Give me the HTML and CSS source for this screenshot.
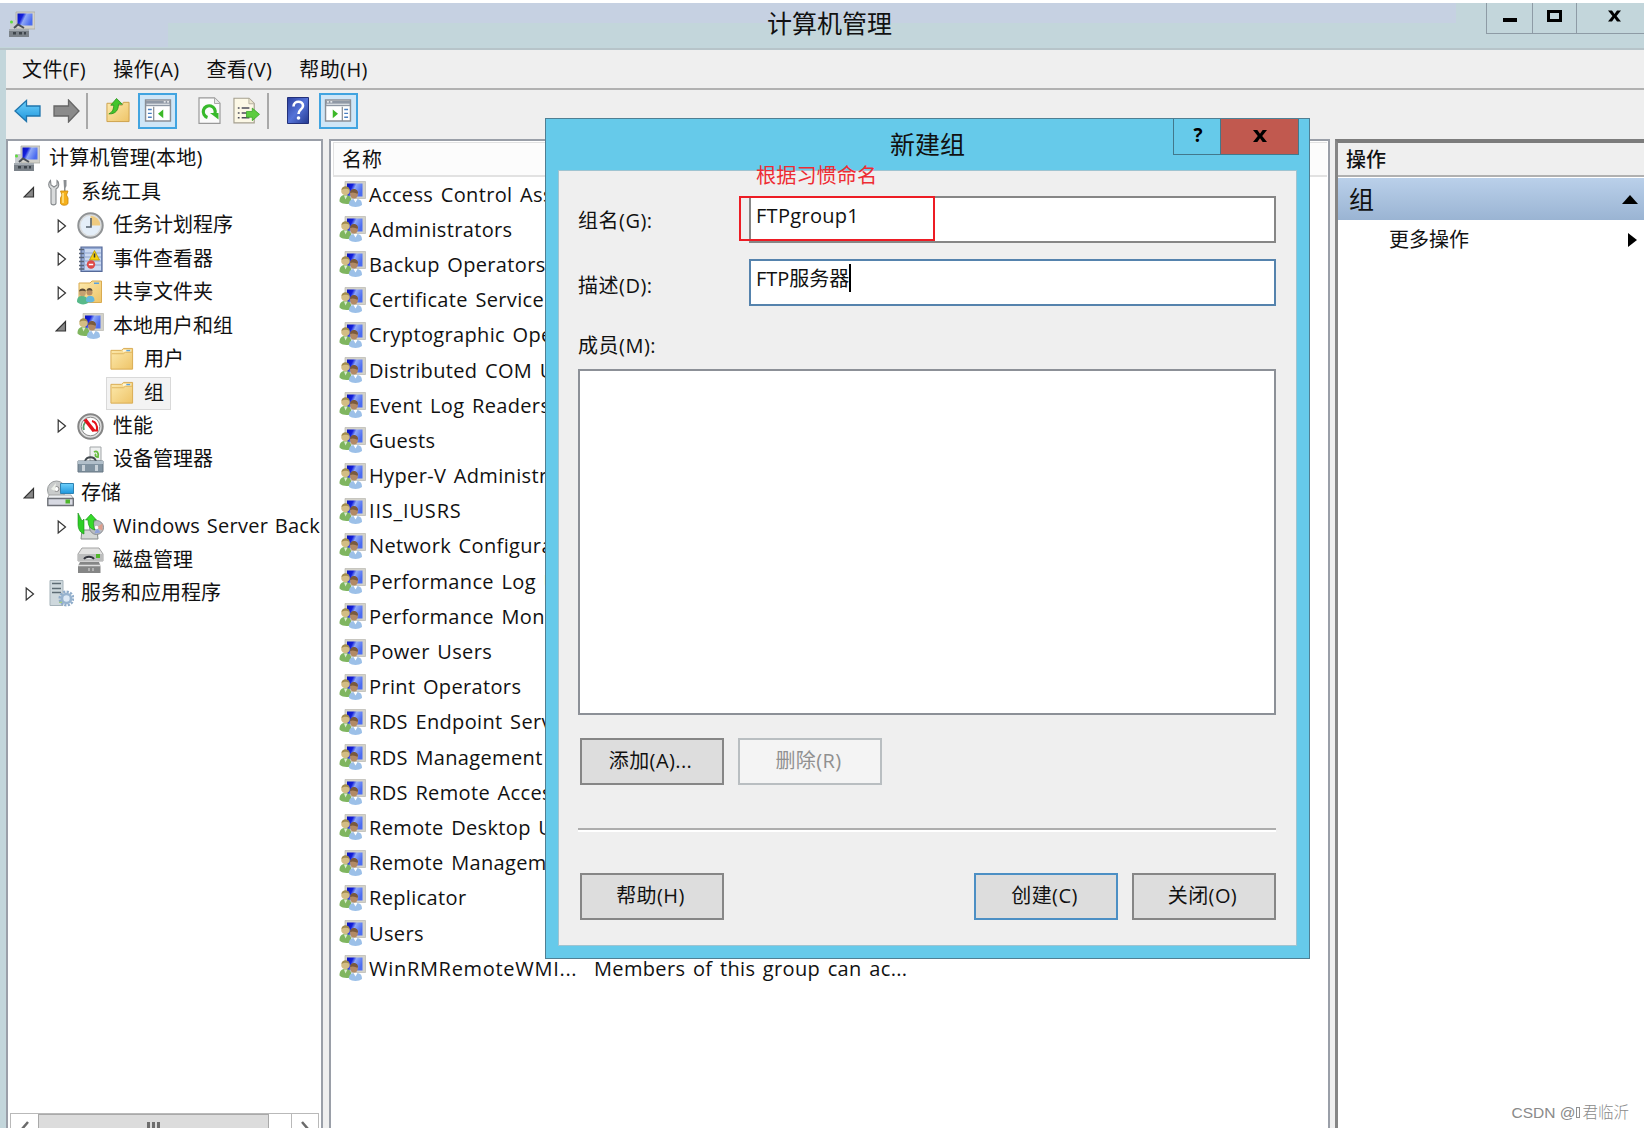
FILE: index.html
```html
<!DOCTYPE html>
<html lang="zh-CN">
<head>
  <meta charset="UTF-8" />
  <title>计算机管理</title>
  <link rel="stylesheet" href="styles.css">
</head>

<body>
  <!-- Icônes -->
  <svg width="0" height="0" class="defs">
    <defs>
      <linearGradient id="g-screen" x1="0" y1="0" x2="1" y2="0.4">
        <stop offset="0" stop-color="#0a12b8" /><stop offset="0.35" stop-color="#1420dc" /><stop offset="0.55" stop-color="#8fa8f6" /><stop offset="1" stop-color="#4b6cf0" />
      </linearGradient>
      <linearGradient id="g-folder" x1="0" y1="0" x2="1" y2="1">
        <stop offset="0" stop-color="#fdeaae" /><stop offset="1" stop-color="#eec468" />
      </linearGradient>
      <linearGradient id="g-blue" x1="0" y1="0" x2="0" y2="1">
        <stop offset="0" stop-color="#6fd0fb" /><stop offset="1" stop-color="#1e96dc" />
      </linearGradient>
      <linearGradient id="g-help" x1="0" y1="0" x2="1" y2="1">
        <stop offset="0" stop-color="#2b3f9e" /><stop offset="0.5" stop-color="#5573d8" /><stop offset="1" stop-color="#24398f" />
      </linearGradient>

      <symbol id="i-pc" viewBox="0 0 27 27">
        <path d="M8 1h19v17H8z" fill="#d3d2cb" stroke="#aaa9a2" stroke-width=".8" />
        <path d="M9.500 2.500h15v12h-15z" fill="url(#g-screen)" />
        <path d="M2 9h6v9H2z" fill="#c9cdd0" />
        <circle cx="3.500" cy="11" r="1.500" fill="#5fdc3c" />
        <path d="M6 17l4-3.500 6 3.500" fill="none" stroke="#4a4f55" stroke-width="2" />
        <path d="M1 18h20v8H1z" fill="#7b8289" />
        <path d="M1 18h20v2H1z" fill="#a4abb1" />
        <path d="M5 21h3v2.500H5zM11 21h3v2.500h-3zM16 21h2v2.500h-2z" fill="#3d444b" />
      </symbol>

      <symbol id="i-users" viewBox="0 0 27 27">
        <path d="M6 .5h20.500v17H6z" fill="#d3d2ca" stroke="#b9b8b0" stroke-width=".7" />
        <path d="M8 2.500h15.500v13H8z" fill="url(#g-screen)" />
        <path d="M.5 20.500c0-5 2-6.500 6-6.500s6 2 6 8c-3 1.500-9 1.500-12-1.500z" fill="#7fb55f" />
        <path d="M5 14.500l1.500 4 2-4z" fill="#dcebd2" />
        <circle cx="6.500" cy="10" r="4.300" fill="#d3bd84" />
        <path d="M2.500 9c0-5 8-5 8 0-2-1.500-5-2-8 0z" fill="#a08c4e" />
        <path d="M10 24c0-5 2-6 6.500-6s6.500 1.500 6.500 6c-3 2.500-10 2.500-13 0z" fill="#9cc0e8" />
        <path d="M14.500 18l2 3.500 2-3.500z" fill="#fff" />
        <ellipse cx="15" cy="13" rx="3.900" ry="4.500" fill="#b28a65" />
        <path d="M11 12c0-5.500 8.500-5 8 .5-3 0-4-2-8-.5z" fill="#7a5a3d" />
      </symbol>

      <symbol id="i-folder" viewBox="0 0 27 27">
        <path d="M2 4h11l2-2h9.500v21.500H2z" fill="url(#g-folder)" stroke="#d9ab51" stroke-width="1" />
        <path d="M14.500 3.500h8v2h-8z" fill="#fff8dd" /><path d="M18 3.500h4v1.500h-4z" fill="#5ba2dd" />
        <path d="M3 7.500h12l2-1.500h7" fill="none" stroke="#e0b660" />
      </symbol>

      <symbol id="i-tools" viewBox="0 0 27 27">
        <path d="M3.500 1.500c-2 2-3 6 .5 8.500v14c0 2.500 5 2.500 5 0V10c4-2 3-7 1-8.500v4.500l-3 2-3-2z" fill="#d9dbdc" stroke="#85898c" stroke-width="1.100" />
        <path d="M16.500 1h3v6l-1 2v3h-1.500V9z" fill="#8a8e92" />
        <path d="M13.500 12h7.500l-1.500 4 1.500 3v5c0 3-7.500 3-7.500 0v-5l1.500-3z" fill="#f5b01c" stroke="#c98508" stroke-width=".8" />
        <path d="M16 14v10" stroke="#ffe48b" stroke-width="1.500" />
      </symbol>

      <symbol id="i-clock" viewBox="0 0 27 27">
        <circle cx="13.500" cy="13.500" r="12.200" fill="#d9dbdc" stroke="#909395" stroke-width="2" />
        <circle cx="13.500" cy="13.500" r="9.800" fill="#e4eef8" />
        <path d="M13.500 13.500V3.700a9.800 9.800 0 0 1 9.800 9.800z" fill="#efcb80" />
        <path d="M14 6v9h-5" fill="none" stroke="#55636f" stroke-width="1.600" />
      </symbol>

      <symbol id="i-event" viewBox="0 0 27 27">
        <path d="M4 1h21v24.500H4z" fill="#93a9d3" stroke="#566a99" stroke-width="1.200" />
        <path d="M8 3h16v21H8z" fill="#cbd9f1" />
        <path d="M8 7h16M8 11h16M8 15h16M8 19h16" stroke="#8ea4cf" />
        <path d="M2 3.500h5M2 7.500h5M2 11.500h5M2 15.500h5M2 19.500h5M2 23h5" stroke="#596477" stroke-width="1.400" />
        <path d="M17.500 4.500l5 9.500h-10z" fill="#f6d210" stroke="#b89a08" stroke-width=".8" />
        <path d="M17.500 7.500v4" stroke="#333" stroke-width="1.500" />
        <circle cx="14" cy="18.500" r="4.200" fill="#dd4a48" />
        <path d="M11.800 18.500h4.400" stroke="#fff" stroke-width="1.500" />
      </symbol>

      <symbol id="i-share" viewBox="0 0 27 27">
        <path d="M2 4h11l2-2h9.500v21.500H2z" fill="url(#g-folder)" stroke="#d9ab51" />
        <path d="M17 3.500h5v1.500h-5z" fill="#5ba2dd" />
        <path d="M0 23c0-5 2-6 5-6s6 1 6 7c-3 2-8 2-11-1z" fill="#58b98a" />
        <path d="M9 22c0-5 2-5 4.500-5s4 1 4 5c-3 2-6 2-8.500 0z" fill="#65b7dc" />
        <circle cx="5.500" cy="14" r="3.300" fill="#c4a171" /><circle cx="12.500" cy="13.500" r="3" fill="#b98e63" />
        <path d="M2 12.500c0-4 7-4 7 0-2-1-5-1-7 0zM9.500 12c0-4 6-4 6 0-2-1-4-1-6 0z" fill="#5b4b36" />
      </symbol>

      <symbol id="i-perf" viewBox="0 0 27 27">
        <circle cx="13.500" cy="13.500" r="12.200" fill="#dedede" stroke="#858585" stroke-width="2" />
        <circle cx="13.500" cy="13.500" r="9.300" fill="#fff" stroke="#8b8b8b" />
        <path d="M7 17a7 7 0 0 1 3-9" fill="none" stroke="#5aa06c" stroke-width="1.800" />
        <path d="M8 6.500l9 11.500" stroke="#e3101a" stroke-width="3.600" />
        <path d="M15 8c4 1 5.500 4 5 9.500h-4" fill="none" stroke="#e3101a" stroke-width="2" />
      </symbol>

      <symbol id="i-device" viewBox="0 0 27 27">
        <path d="M13 1h11v14H13z" fill="#eef0f0" stroke="#a1a5a7" />
        <path d="M17 6c3-2 5 1 4 5-3 0-3-2-2-3" fill="none" stroke="#65bd3c" stroke-width="1.800" />
        <path d="M8 15c2-5 9-5 11 0" fill="none" stroke="#43494e" stroke-width="2" />
        <path d="M1 15h25v11H1z" fill="#8193a1" stroke="#667683" />
        <path d="M1 15h25v3H1z" fill="#b1bfca" />
        <path d="M5 19h3v6H5zM18 19h3v6h-3z" fill="#c9d2d9" />
      </symbol>

      <symbol id="i-storage" viewBox="0 0 27 27">
        <circle cx="9.500" cy="10" r="9" fill="#c9cbcb" stroke="#999c9d" />
        <circle cx="9.500" cy="9" r="2.500" fill="#fff" stroke="#888" />
        <path d="M9 3l-5 6 4 2z" fill="#ecefe9" />
        <path d="M13.500 3.500H26.500v10H13.500z" fill="url(#g-blue)" stroke="#2e82b2" />
        <path d="M2 15h22l2.500 4H.5z" fill="#eceef1" stroke="#999" stroke-width=".8" />
        <path d="M.8 18.500h25.500v7H.8z" fill="#d7d9e2" stroke="#6d7077" stroke-width="1.400" />
        <path d="M18.500 19.500h4.500v4h-4.500z" fill="#4fb62c" />
      </symbol>

      <symbol id="i-backup" viewBox="0 0 27 27">
        <path d="M5 17h15l1 9H4z" fill="#d5d8d7" stroke="#858a8a" />
        <circle cx="19.500" cy="14.500" r="7" fill="#b9bcc0" stroke="#898d91" />
        <path d="M19.500 14.500l6-4v7z" fill="#df9e8c" /><path d="M19.500 14.500l-2 6 6-1z" fill="#8fa2db" />
        <circle cx="19.500" cy="14.500" r="1.800" fill="#fff" />
        <path d="M1 0l4 8 2-2v15c-3-1-6-4-6-10z" fill="#2fcf27" stroke="#158c14" stroke-width=".6" />
        <path d="M14 1l5.500 6h-2.500c-1 5 0 8 1 10-5-1-7-4-7-10H8.500z" fill="#35da2b" stroke="#158c14" stroke-width=".6" />
      </symbol>

      <symbol id="i-disk" viewBox="0 0 27 27">
        <path d="M5 1h17l4 6v7H1V7z" fill="#e2e2e1" stroke="#a3a3a3" />
        <path d="M1 7h25v7H1z" fill="#bcbdbd" />
        <path d="M19 7h4v4h-4z" fill="#52b72c" />
        <path d="M7 12c2-3 8-3 10 0" fill="#e4e4e6" stroke="#33353d" stroke-width="1.800" />
        <path d="M3 15h19l1.500 4v7H1v-7z" fill="#858686" />
        <path d="M1 18.500h23" stroke="#dedede" stroke-width="1.500" />
        <path d="M12 21v3M16 21v3" stroke="#ddd" />
      </symbol>

      <symbol id="i-services" viewBox="0 0 27 27">
        <path d="M3 .5h13v25H3z" fill="#ced8dd" stroke="#a5b2b9" />
        <path d="M5 3.500h9M5 8.500h9M5 12.500h9" stroke="#5d6b74" stroke-width="1.500" />
        <path d="M12 20h3v3h-3z" fill="#a8d86f" />
        <circle cx="19.500" cy="18.500" r="6.700" fill="none" stroke="#8facca" stroke-width="2.600" stroke-dasharray="2.200 1.300" />
        <circle cx="19.500" cy="18.500" r="4.500" fill="#dde9f5" stroke="#97b3cf" stroke-width="2.600" />
      </symbol>

      <symbol id="i-back" viewBox="0 0 27 24">
        <path d="M1 12L12.500 1.500v5.500H26v10H12.500v5.500z" fill="url(#g-blue)" stroke="#1f75ad" stroke-width="1.300" />
      </symbol>
      <symbol id="i-forward" viewBox="0 0 27 24">
        <path d="M26 12L15.500 1v6H1v10h14.500v6z" fill="#8b8b8b" stroke="#666" stroke-width="1.300" />
      </symbol>
      <symbol id="i-up" viewBox="0 0 27 27">
        <path d="M2 6h8l2 2h6l1-3h6v20H2z" fill="url(#g-folder)" stroke="#cda04a" />
        <path d="M4 17c4-2 5-5 5-9H6l6-7 6 6h-4c0 6-3 10-9 10z" fill="#43c52c" stroke="#258c19" stroke-width=".8" />
      </symbol>
      <symbol id="i-panel" viewBox="0 0 28 24">
        <path d="M1 1h26v22H1z" fill="#fff" stroke="#8a8f96" stroke-width="1.500" />
        <path d="M1.500 2h25v5.500h-25z" fill="#8f98a5" /><path d="M2 5.500h24" stroke="#dfe3e8" stroke-width="1.300" />
        <path d="M20 3h2M23.500 3h2" stroke="#fff" stroke-width="1.500" />
        <path d="M9.500 8v15" stroke="#8a8f96" stroke-width="1.300" />
        <path d="M3.500 11h4M3.500 15h4M3.500 19h4" stroke="#4a7fc0" stroke-width="1.500" />
        <path d="M19.500 11v9l-5.500-4.500z" fill="#3bb827" />
      </symbol>
      <symbol id="i-refresh" viewBox="0 0 23 27">
        <path d="M1 .8h15.500l5.500 5.500v20H1z" fill="#fbfbfb" stroke="#999" stroke-width="1.200" />
        <path d="M16.500 1v5.500H22" fill="#e6e6e6" stroke="#aaa" />
        <path d="M9.500 20.500a6 6 0 1 1 7.500-4" fill="none" stroke="#37b92b" stroke-width="3.200" />
        <path d="M12 16h8.500v6.500z" fill="#37b92b" />
      </symbol>
      <symbol id="i-export" viewBox="0 0 28 27">
        <path d="M1 .8h15.500l5.500 5.500v20H1z" fill="#fcf8e6" stroke="#a5a08f" stroke-width="1.200" />
        <path d="M16.500 1v5.500H22" fill="#eee8d0" stroke="#b5b0a0" />
        <path d="M5 11h1.800M5 16h1.800M5 21h1.800M9 11h8M9 16h5M9 21h8" stroke="#4c4c5b" stroke-width="1.600" />
        <path d="M14 14.500h6v-3.500l7.500 6.500-7.500 6.500v-3.500h-6z" fill="#5ccc3f" stroke="#34a324" stroke-width=".8" />
      </symbol>
      <symbol id="i-help" viewBox="0 0 22 27">
        <path d="M.5.5h21v26H.5z" fill="url(#g-help)" stroke="#22307a" />
        <path d="M6.500 9.500c0-6.500 10-6 9.500-.5-.3 3.500-4.500 3.500-4.500 8" fill="none" stroke="#fff" stroke-width="2.600" />
        <circle cx="11.500" cy="21" r="1.800" fill="#fff" />
      </symbol>

      <symbol id="i-open" viewBox="0 0 12 12"><path d="M10.500 1.500v9.500H1z" fill="#888" stroke="#333" stroke-width="1.200" /></symbol>
      <symbol id="i-closed" viewBox="0 0 10 16"><path d="M1.200 2v12L8.500 8z" fill="#fff" stroke="#333" stroke-width="1.200" /></symbol>
      <symbol id="i-x" viewBox="0 0 14 12"><path d="M0 0h4.300L7 3.800 9.700 0H14L9.200 6 14 12H9.700L7 8.200 4.300 12H0l4.800-6z" fill="#000" /></symbol>
    </defs>
  </svg>

  <div class="window">
    <header class="titlebar">
      <svg class="ico"><use href="#i-pc" /></svg>
      <h1>计算机管理</h1>
      <div class="win-buttons">
        <span class="min"><i></i></span>
        <span class="max"><i></i></span>
        <span class="close"><svg><use href="#i-x" /></svg></span>
      </div>
    </header>

    <div class="client">
      <nav class="menu">
        <span>文件(F)</span>
        <span>操作(A)</span>
        <span>查看(V)</span>
        <span>帮助(H)</span>
      </nav>

      <div class="toolbar">
        <svg class="t-back"><use href="#i-back" /></svg>
        <svg class="t-forward"><use href="#i-forward" /></svg>
        <i class="sep"></i>
        <svg class="t-up"><use href="#i-up" /></svg>
        <span class="toggle"><svg><use href="#i-panel" /></svg></span>
        <svg class="t-refresh"><use href="#i-refresh" /></svg>
        <svg class="t-export"><use href="#i-export" /></svg>
        <i class="sep sep2"></i>
        <svg class="t-help"><use href="#i-help" /></svg>
        <span class="toggle flip"><svg><use href="#i-panel" /></svg></span>
      </div>

      <main class="panes">
        <aside class="tree">
          <ul>
            <li class="l0"><svg class="ico"><use href="#i-pc" /></svg><span>计算机管理(本地)</span></li>
            <li class="l1"><svg class="arrow"><use href="#i-open" /></svg><svg class="ico"><use href="#i-tools" /></svg><span>系统工具</span></li>
            <li class="l2"><svg class="arrow shut"><use href="#i-closed" /></svg><svg class="ico"><use href="#i-clock" /></svg><span>任务计划程序</span></li>
            <li class="l2"><svg class="arrow shut"><use href="#i-closed" /></svg><svg class="ico"><use href="#i-event" /></svg><span>事件查看器</span></li>
            <li class="l2"><svg class="arrow shut"><use href="#i-closed" /></svg><svg class="ico"><use href="#i-share" /></svg><span>共享文件夹</span></li>
            <li class="l2"><svg class="arrow"><use href="#i-open" /></svg><svg class="ico"><use href="#i-users" /></svg><span>本地用户和组</span></li>
            <li class="l3"><div><svg class="ico"><use href="#i-folder" /></svg><span>用户</span></div></li>
            <li class="l3"><div class="selected"><svg class="ico"><use href="#i-folder" /></svg><span>组</span></div></li>
            <li class="l2"><svg class="arrow shut"><use href="#i-closed" /></svg><svg class="ico"><use href="#i-perf" /></svg><span>性能</span></li>
            <li class="l2"><i class="arrow"></i><svg class="ico"><use href="#i-device" /></svg><span>设备管理器</span></li>
            <li class="l1"><svg class="arrow"><use href="#i-open" /></svg><svg class="ico"><use href="#i-storage" /></svg><span>存储</span></li>
            <li class="l2"><svg class="arrow shut"><use href="#i-closed" /></svg><svg class="ico"><use href="#i-backup" /></svg><span class="en">Windows Server Back</span></li>
            <li class="l2"><i class="arrow"></i><svg class="ico"><use href="#i-disk" /></svg><span>磁盘管理</span></li>
            <li class="l1"><svg class="arrow shut"><use href="#i-closed" /></svg><svg class="ico"><use href="#i-services" /></svg><span>服务和应用程序</span></li>
          </ul>
          <div class="scrollbar">
            <span class="sb-left"><svg viewBox="0 0 10 16"><path d="M8 1L2 8l6 7" /></svg></span>
            <span class="thumb"><i></i><i></i><i></i></span>
            <span class="track"></span>
            <span class="sb-right"><svg viewBox="0 0 10 16"><path d="M2 1l6 7-6 7" /></svg></span>
          </div>
        </aside>

        <section class="list">
          <div class="list-head">名称</div>
          <ul>
            <li><svg class="ico"><use href="#i-users" /></svg><span>Access Control Assist...</span></li>
            <li><svg class="ico"><use href="#i-users" /></svg><span>Administrators</span></li>
            <li><svg class="ico"><use href="#i-users" /></svg><span>Backup Operators</span></li>
            <li><svg class="ico"><use href="#i-users" /></svg><span>Certificate Service ...</span></li>
            <li><svg class="ico"><use href="#i-users" /></svg><span>Cryptographic Oper...</span></li>
            <li><svg class="ico"><use href="#i-users" /></svg><span>Distributed COM Us...</span></li>
            <li><svg class="ico"><use href="#i-users" /></svg><span>Event Log Readers</span></li>
            <li><svg class="ico"><use href="#i-users" /></svg><span>Guests</span></li>
            <li><svg class="ico"><use href="#i-users" /></svg><span>Hyper-V Administra...</span></li>
            <li><svg class="ico"><use href="#i-users" /></svg><span class="iis">IIS_IUSRS</span></li>
            <li><svg class="ico"><use href="#i-users" /></svg><span>Network Configurat...</span></li>
            <li><svg class="ico"><use href="#i-users" /></svg><span>Performance Log U...</span></li>
            <li><svg class="ico"><use href="#i-users" /></svg><span>Performance Monit...</span></li>
            <li><svg class="ico"><use href="#i-users" /></svg><span>Power Users</span></li>
            <li><svg class="ico"><use href="#i-users" /></svg><span>Print Operators</span></li>
            <li><svg class="ico"><use href="#i-users" /></svg><span>RDS Endpoint Serve...</span></li>
            <li><svg class="ico"><use href="#i-users" /></svg><span>RDS Management ...</span></li>
            <li><svg class="ico"><use href="#i-users" /></svg><span>RDS Remote Access...</span></li>
            <li><svg class="ico"><use href="#i-users" /></svg><span>Remote Desktop Us...</span></li>
            <li><svg class="ico"><use href="#i-users" /></svg><span>Remote Managem...</span></li>
            <li><svg class="ico"><use href="#i-users" /></svg><span>Replicator</span></li>
            <li><svg class="ico"><use href="#i-users" /></svg><span>Users</span></li>
            <li><svg class="ico"><use href="#i-users" /></svg><span class="name">WinRMRemoteWMI...</span><span>Members of this group can ac...</span></li>
          </ul>
        </section>

        <aside class="actions">
          <div class="act-head">操作</div>
          <div class="act-group"><span>组</span><i class="tri-up"></i></div>
          <div class="act-more"><span>更多操作</span><i class="tri-right"></i></div>
          <div class="watermark">CSDN @<i class="box"></i>君临沂</div>
        </aside>
      </main>
    </div>
  </div>

  <!-- Boîte de dialogue -->
  <div class="dialog">
    <div class="dlg-title">
      <h2>新建组</h2>
      <div class="dlg-buttons">
        <span class="q">?</span>
        <span class="dlg-close"><svg><use href="#i-x" /></svg></span>
      </div>
    </div>
    <form class="dlg-body">
      <div class="field">
        <label>组名(G):</label>
        <div class="input"><span class="en">FTPgroup1</span></div>
      </div>
      <div class="field second">
        <label>描述(D):</label>
        <div class="input focus"><span>FTP服务器</span><i class="caret"></i></div>
      </div>
      <label class="members-label">成员(M):</label>
      <div class="members"></div>
      <div class="buttons">
        <button type="button">添加(A)...</button>
        <button type="button" disabled>删除(R)</button>
      </div>
      <div class="line"></div>
      <div class="buttons bottom">
        <button type="button" class="help">帮助(H)</button>
        <button type="button" class="default">创建(C)</button>
        <button type="button">关闭(O)</button>
      </div>
    </form>
    <div class="note">根据习惯命名</div>
    <div class="mark"></div>
  </div>
</body>
</html>
```
FILE: styles.css
```css
/* Reset et base */
* {
  box-sizing: border-box;
}

body {
  margin: 0;
  width: 1644px;
  height: 1128px;
  overflow: hidden;
  position: relative;
  background: #fff;
  color: #111;
  font-family: 'Open Sans', 'Noto Sans CJK SC', sans-serif;
  font-size: 20px;
  line-height: 1;
  white-space: nowrap;
}

ul {
  list-style: none;
  margin: 0;
  padding: 0;
}

h1, h2 {
  margin: 0;
  font-weight: 400;
  font-size: 25px;
  line-height: 30px;
}

svg {
  display: block;
  flex-shrink: 0;
}

.defs {
  position: absolute;
}

.ico {
  width: 27px;
  height: 27px;
}

/* Fenêtre principale */
.window {
  height: 1128px;
  padding-top: 3px;
  display: flex;
  flex-direction: column;
}

.titlebar {
  height: 47px;
  flex-shrink: 0;
  display: flex;
  justify-content: space-between;
  align-items: flex-start;
  padding-left: 8px;
  border-bottom: 2px solid #b7c4c9;
  background:
    linear-gradient(#c6d1e2, #c6d1e2) 0 0 / 1456px 20px no-repeat,
    linear-gradient(#c6d1e2, #c6d1e2) 0 0 / 168px 44px no-repeat,
    #c3d6db;
}

.titlebar .ico {
  margin-top: 8px;
}

.titlebar h1 {
  margin: 5px 0 0 138px;
}

.win-buttons {
  display: flex;
  height: 31px;
  border: 1px solid #8e9ba5;
  border-width: 0 0 1px 1px;
}

.win-buttons span {
  width: 46px;
  border-right: 1px solid #8e9ba5;
  display: flex;
  justify-content: center;
}

.win-buttons .max {
  width: 44px;
}

.win-buttons .close {
  width: 67px;
  border-right: 0;
  padding-left: 8px;
}

.min i {
  width: 14px;
  height: 4px;
  margin: 15px 0 0 2px;
  background: #000;
}

.max i {
  width: 15px;
  height: 12px;
  margin-top: 7px;
  border: 3px solid #000;
}

.close svg {
  width: 13px;
  height: 12px;
  margin-top: 7px;
}

.client {
  flex: 1;
  min-height: 0;
  display: flex;
  flex-direction: column;
  background: #efefef;
  border-left: 6px solid #c3d6db;
}

/* Menu */
.menu {
  height: 40px;
  flex-shrink: 0;
  display: flex;
  align-items: center;
  gap: 27px;
  padding: 1px 0 0 16px;
  letter-spacing: 0.4px;
  border-bottom: 2px solid #b1b1b1;
}

/* Barre d'outils */
.toolbar {
  height: 49px;
  flex-shrink: 0;
  display: flex;
  align-items: center;
  padding: 0 0 8px 8px;
}

.t-back, .t-forward {
  width: 27px;
  height: 24px;
}

.t-forward {
  margin-left: 12px;
}

.sep {
  width: 2px;
  height: 36px;
  margin: 0 17px 0 6px;
  background: #a9a9a9;
}

.t-up {
  width: 26px;
  height: 27px;
}

.toggle {
  width: 39px;
  height: 36px;
  margin-left: 7px;
  display: flex;
  align-items: center;
  justify-content: center;
  border: 2px solid #41a4e0;
  background: #cfe6f7;
}

.toggle svg {
  width: 28px;
  height: 23px;
}

.flip {
  margin-left: 10px;
  transform: scaleX(-1);
}

.t-refresh {
  width: 23px;
  height: 27px;
  margin-left: 21px;
}

.t-export {
  width: 27px;
  height: 27px;
  margin-left: 12px;
}

.sep2 {
  margin: 0 18px 0 7px;
}

.t-help {
  width: 22px;
  height: 27px;
}

/* Panneaux */
.panes {
  flex: 1;
  min-height: 0;
  display: flex;
}

.tree {
  width: 317px;
  flex-shrink: 0;
  display: flex;
  flex-direction: column;
  justify-content: space-between;
  padding: 1px 2px 0 1px;
  margin-right: 6px;
  background: #fff;
  border: 2px solid #9a9fa8;
  border-bottom: 0;
}

.tree li {
  height: 33.48px;
  display: flex;
  align-items: center;
}

.tree li span {
  padding-bottom: 1px;
}

.tree .l0 {
  padding-left: 4px;
}

.tree .l0 span {
  margin-left: 9px;
  letter-spacing: 0.2px;
}

.tree .l1 {
  padding-left: 14px;
}

.tree .l2 {
  padding-left: 46px;
}

.tree .l3 {
  padding-left: 97px;
}

.arrow {
  width: 12px;
  height: 12px;
  margin-right: 10px;
  flex-shrink: 0;
}

.l1 .arrow {
  margin-right: 12px;
}

.shut {
  height: 16px;
  width: 10px;
  margin-left: 2px;
}

.tree .ico + span {
  margin-left: 9px;
}

.tree .l1 .ico + span {
  margin-left: 7px;
}

.l3 div {
  display: flex;
  align-items: center;
  height: 33px;
  padding: 0 6px 0 2px;
  border: 1px solid transparent;
}

.tree .l3 .ico {
  width: 26px;
}

.tree .l3 .ico + span {
  margin-left: 9px;
}

.l3 .selected {
  background: #f3f3f3;
  border-color: #d9d9d9;
}

.en {
  letter-spacing: 0.3px;
  word-spacing: 1px;
}

.scrollbar {
  height: 15px;
  margin-left: 1px;
  display: flex;
  overflow: hidden;
  border: 1px solid #b9b9b9;
  border-width: 1px 1px 0;
}

.scrollbar span {
  display: flex;
  justify-content: center;
  padding-top: 7px;
  height: 30px;
}

.scrollbar svg {
  width: 10px;
  height: 16px;
  fill: none;
  stroke: #6b6b6b;
  stroke-width: 2.5;
}

.sb-left, .sb-right {
  width: 27px;
}

.sb-right {
  border-left: 1px solid #b9b9b9;
}

.thumb {
  width: 231px;
  gap: 2px;
  background: #dcdcdc;
  border: 1px solid #a9a9a9;
}

.thumb i {
  width: 3px;
  height: 12px;
  background: #6e6e6e;
}

.track {
  flex: 1;
}

/* Liste des groupes */
.list {
  width: 1001px;
  flex-shrink: 0;
  background: #fff;
  border: 2px solid #9a9fa8;
  border-bottom: 0;
  padding: 1px 1px 0 2px;
  overflow: hidden;
}

.list-head {
  height: 35px;
  line-height: 34px;
  padding-left: 8px;
  background: #fcfcfc;
  border: 1px solid #e2e2e2;
  border-right: 0;
  border-bottom-width: 2px;
}

.list li {
  height: 35.19px;
  display: flex;
  align-items: center;
  padding-left: 6px;
  letter-spacing: 0.35px;
  word-spacing: 2px;
}

.list li .ico {
  margin-right: 3px;
}

.list .iis {
  letter-spacing: 0.8px;
}

.name {
  width: 225px;
  letter-spacing: 0.7px;
}

/* Actions */
.actions {
  flex: 1;
  margin-left: 5px;
  background: #fff;
  border-left: 3px solid #868686;
  border-top: 4px solid #7c7c7c;
  display: flex;
  flex-direction: column;
}

.act-head {
  height: 34px;
  line-height: 34px;
  padding-left: 8px;
  font-weight: 500;
  background: #efefef;
  border-bottom: 2px solid #b0b0b0;
}

.act-group {
  height: 42px;
  margin-top: 1px;
  padding: 0 6px 0 11px;
  display: flex;
  align-items: center;
  justify-content: space-between;
  font-size: 25px;
  background: linear-gradient(#bad0ea, #9ab4d3);
}

.tri-up {
  border: 8px solid transparent;
  border-bottom: 9px solid #000;
  border-top: 0;
}

.act-more {
  height: 40px;
  padding: 0 7px 0 51px;
  display: flex;
  align-items: center;
  justify-content: space-between;
}

.tri-right {
  border: 7px solid transparent;
  border-left: 9px solid #000;
  border-right: 0;
}

.watermark {
  margin-top: auto;
  padding: 0 15px 8px 0;
  text-align: right;
  font-family: 'Liberation Sans', 'Noto Sans CJK SC', sans-serif;
  font-size: 15.5px;
  font-weight: 300;
  color: #8a8a8a;
}

.box {
  display: inline-block;
  width: 4px;
  height: 11px;
  margin: 0 2px 0 1px;
  border: 1px solid #909090;
}

/* Dialogue */
.dialog {
  position: absolute;
  left: 545px;
  top: 118px;
  width: 765px;
  height: 841px;
  padding: 0 12px 12px;
  display: flex;
  flex-direction: column;
  background: #66caea;
  border: 1px solid #4f7f93;
}

.dlg-title {
  height: 51px;
  flex-shrink: 0;
  display: flex;
  align-items: flex-start;
  justify-content: flex-end;
}

.dlg-title h2 {
  margin: 10px 208px 0 0;
}

.dlg-buttons {
  display: flex;
  height: 36px;
  margin-right: -2px;
  border: 1px solid #42788c;
  border-top: 0;
}

.dlg-buttons span {
  display: flex;
  justify-content: center;
  align-items: center;
  padding-bottom: 2px;
}

.q {
  width: 46px;
  padding-left: 2px;
  font-size: 19px;
  font-weight: 700;
  color: #000;
}

.dlg-close {
  width: 78px;
  background: #c1594f;
  border-left: 1px solid #42788c;
}

.dlg-close svg {
  width: 14px;
  height: 12px;
}

.dlg-body {
  flex: 1;
  padding: 25px 20px 0 19px;
  background: #efefef;
  border: 1px solid #9fc4d1;
}

.field {
  display: flex;
  height: 47px;
}

.field label,
.members-label {
  letter-spacing: 0.5px;
}

.field label {
  width: 171px;
  padding-top: 15px;
}

.second {
  margin-top: 16px;
}

.second label {
  padding-top: 17px;
}

.input {
  flex: 1;
  padding: 8px 5px;
  display: flex;
  background: #fff;
  border: 2px solid #868686;
}

.focus {
  border-color: #5583ad;
}

.caret {
  width: 2px;
  height: 28px;
  margin-top: -5px;
  background: #000;
}

.members-label {
  display: block;
  margin-top: 30px;
}

.members {
  height: 346px;
  margin-top: 13px;
  background: #fff;
  border: 2px solid #8c9097;
}

.buttons {
  display: flex;
  gap: 14px;
  padding-left: 2px;
  margin-top: 23px;
}

button {
  width: 144px;
  height: 47px;
  padding: 0 3px 1px 0;
  font: inherit;
  letter-spacing: 0.4px;
  color: #111;
  background: #dddddd;
  border: 2px solid #868686;
}

button:disabled {
  color: #909090;
  background: #f4f4f4;
  border-color: #b9bec1;
}

.line {
  height: 4px;
  margin-top: 43px;
  background: #fff;
  border-top: 2px solid #adadad;
}

.bottom {
  margin-top: 41px;
}

.help {
  margin-right: auto;
}

.default {
  border-color: #4c8fc4;
}

/* Annotations rouges */
.note {
  position: absolute;
  left: 210px;
  top: 46px;
  font-size: 20.2px;
  color: #ee2c33;
}

.mark {
  position: absolute;
  left: 193px;
  top: 77px;
  width: 196px;
  height: 45px;
  border: 2px solid #ed1c24;
}
```
